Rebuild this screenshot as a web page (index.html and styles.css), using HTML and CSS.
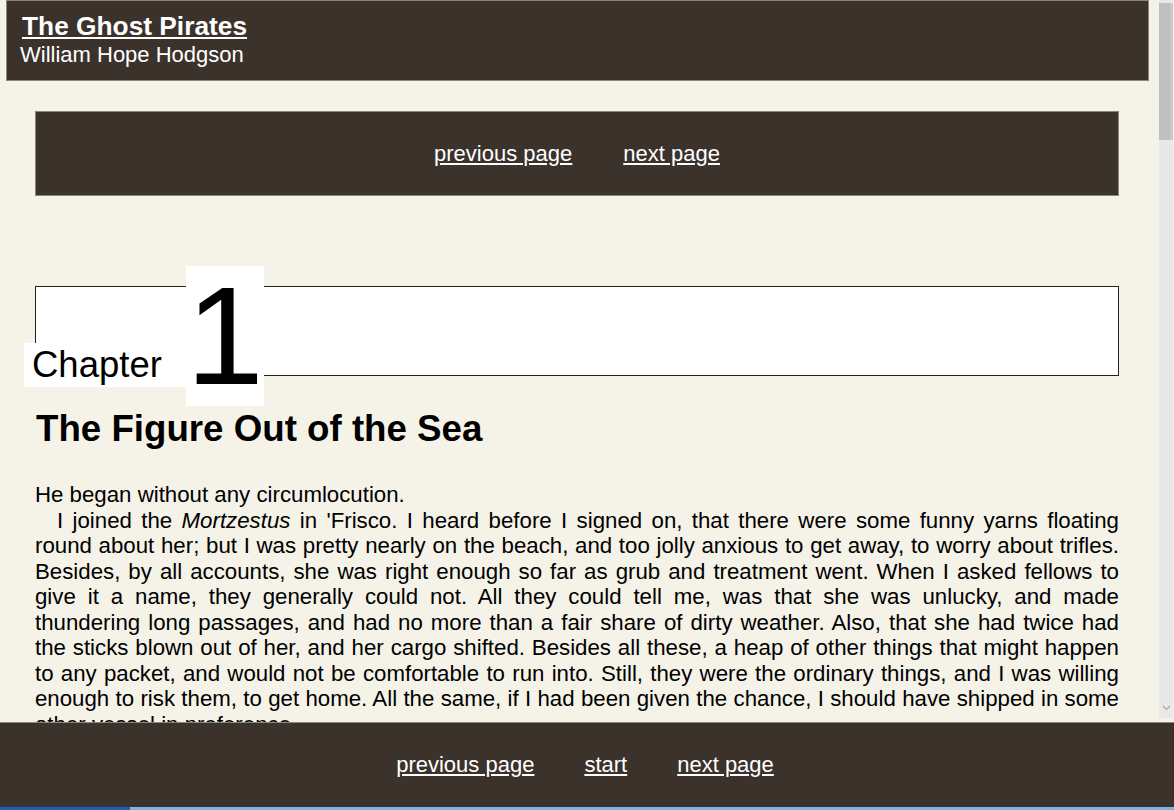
FILE: index.html
```html
<!DOCTYPE html>
<html lang="en">
<head>
<meta charset="utf-8">
<title>The Ghost Pirates</title>
<link rel="stylesheet" href="styles.css">
</head>
<body>
<div class="window">
  <div class="viewport">
    <header class="masthead">
      <div class="book-title"><a href="#">The Ghost Pirates</a></div>
      <div class="book-author">William Hope Hodgson</div>
    </header>
    <main class="content">
      <nav class="pager pager-top">
        <a href="#">previous page</a>
        <a href="#">next page</a>
      </nav>
      <div class="chapter-box">
        <span class="chapter-label">Chapter</span>
        <span class="chapter-num">1</span>
      </div>
      <h2 class="chapter-title">The Figure Out of the Sea</h2>
      <div class="chapter-text">
        <p class="lead">He began without any circumlocution.</p>
        <p>I joined the <em>Mortzestus</em> in 'Frisco. I heard before I signed on, that there were some funny yarns floating round about her; but I was pretty nearly on the beach, and too jolly anxious to get away, to worry about trifles. Besides, by all accounts, she was right enough so far as grub and treatment went. When I asked fellows to give it a name, they generally could not. All they could tell me, was that she was unlucky, and made thundering long passages, and had no more than a fair share of dirty weather. Also, that she had twice had the sticks blown out of her, and her cargo shifted. Besides all these, a heap of other things that might happen to any packet, and would not be comfortable to run into. Still, they were the ordinary things, and I was willing enough to risk them, to get home. All the same, if I had been given the chance, I should have shipped in some other vessel in preference.</p>
      </div>
    </main>
  </div>
  <div class="scrollbar" aria-hidden="true">
    <div class="scroll-thumb"></div>
    <svg class="scroll-arrow" width="9" height="6" viewBox="0 0 9 6"><path d="M1 1 L4.5 4.5 L8 1" fill="none" stroke="#a6a6a6" stroke-width="1.2"/></svg>
  </div>
</div>
<footer class="pager pager-bottom">
  <a href="#">previous page</a>
  <a href="#">start</a>
  <a href="#">next page</a>
</footer>
<div class="taskbar"><span class="taskbar-start"></span></div>
</body>
</html>
```

FILE: styles.css
```css
html, body {
  margin: 0;
  height: 100%;
}

body {
  display: flex;
  flex-direction: column;
  overflow: hidden;
  background: #f5f2e8;
  color: #000;
  font-family: "Liberation Sans", Arial, sans-serif;
}

.window {
  display: flex;
  flex: 1;
  min-height: 0;
}

.viewport {
  flex: 1;
  min-width: 0;
  overflow-y: auto;
  scrollbar-width: none;
}

.scrollbar {
  display: flex;
  flex-direction: column;
  align-items: center;
  width: 14px;
  margin: 0 1px 4px 1px;
  background: #e8e8e8;
}

.scroll-thumb {
  align-self: stretch;
  height: 137px;
  margin-top: 3px;
  background: linear-gradient(to right, #bfbfbf 0, #bfbfbf 11px, #c9c9c9 11px);
}

.scroll-arrow {
  display: block;
  margin-top: auto;
  margin-bottom: 7px;
}

.masthead {
  margin: 0 9px 0 6px;
  padding: 10px 13px 13px;
  background: #3b322c;
  border: 1px solid #8d847a;
  color: #fff;
}

.book-title {
  margin-left: 2px;
  font-size: 26.3px;
  font-weight: bold;
  line-height: 31px;
}

.book-title a {
  color: #fff;
}

.book-author {
  font-size: 22px;
  line-height: 25px;
}

.content {
  padding: 30px 39px 24px 35px;
}

.pager {
  display: flex;
  justify-content: center;
  gap: 51px;
  background: #3b322c;
  font-size: 22px;
  line-height: 25px;
}

.pager a {
  color: #fff;
  text-decoration: underline;
}

.pager-top {
  padding: 29px 0;
  border: 1px solid #8d847a;
}

.chapter-box {
  position: relative;
  height: 88px;
  margin-top: 90px;
  background: #fff;
  border: 1px solid #222;
}

.chapter-label {
  position: absolute;
  left: -12px;
  top: 56px;
  padding: 0 24px 0 8px;
  background: #fff;
  font-size: 36.5px;
  line-height: 44px;
}

.chapter-num {
  position: absolute;
  left: 150px;
  top: -21px;
  background: #fff;
  font-size: 140px;
  line-height: 140px;
}

.chapter-title {
  margin: 32px 0 33px;
  padding-left: 1px;
  font-size: 36.7px;
  font-weight: bold;
  line-height: 41px;
}

.chapter-text {
  min-height: 3300px;
  font-size: 22.25px;
  line-height: 25.5px;
  text-align: justify;
}

.chapter-text p {
  margin: 0;
  text-indent: 22px;
}

.chapter-text p.lead {
  text-indent: 0;
}

.pager-bottom {
  gap: 50px;
  padding: 29px 4px 30px 0;
  border-top: 1px solid #8d847a;
}

.taskbar {
  display: flex;
  height: 3px;
  background: #7fb2e0;
}

.taskbar-start {
  width: 130px;
  background: #1d5fad;
}
```
